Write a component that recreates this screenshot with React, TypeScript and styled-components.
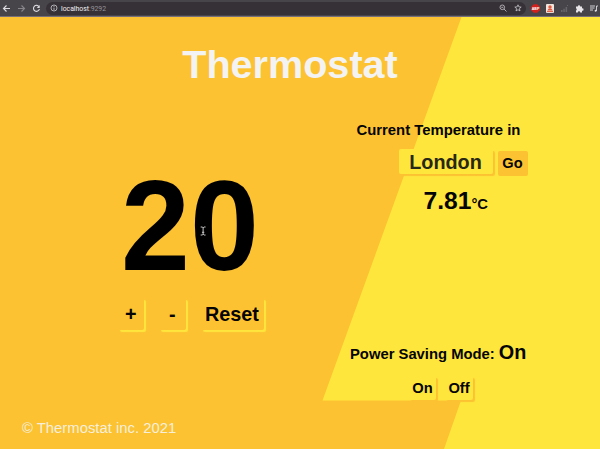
import React from "react";
import styled, { createGlobalStyle } from "styled-components";

const ORANGE = "#fcc232";
const YELLOW = "#ffe63d";

const GlobalStyle = createGlobalStyle`
  * { box-sizing: border-box; }
  body { margin: 0; background: ${ORANGE}; overflow: hidden; }
  button, input { font-family: inherit; }
`;

const Window = styled.div`
  width: 600px;
  height: 449px;
  display: flex;
  flex-direction: column;
  font-family: "Liberation Sans", Arial, sans-serif;
  color: #050505;
`;

const Toolbar = styled.header`
  flex: none;
  height: 17px;
  display: flex;
  align-items: center;
  background: #48454a;
  border-bottom: 1px solid #77707a;
`;

const NavIcons = styled.div`
  display: flex;
  gap: 6px;
  width: 46px;
  padding-left: 2px;
  svg { display: block; }
`;

const AddressBar = styled.div`
  width: 480px;
  height: 13px;
  border-radius: 7px;
  background: #353136;
  display: flex;
  align-items: center;
  padding: 0 4px;
  font: 6.85px/12px Roboto, sans-serif;
  color: #98949a;
  svg { display: block; flex: none; }
`;

const UrlText = styled.span`
  padding: 1px 0 0 3px;
`;

const Host = styled.span`
  color: #f1eff2;
`;

const BarIcons = styled.div`
  display: flex;
  gap: 7px;
  margin-left: auto;
`;

const Extensions = styled.div`
  display: flex;
  gap: 6px;
  margin-left: 5px;
  svg { display: block; }
`;

const Page = styled.main`
  position: relative;
  isolation: isolate;
  flex: 1;
  display: flex;
  flex-direction: column;
  background: ${ORANGE};
  &::before {
    content: "";
    position: absolute;
    inset: 0;
    z-index: -1;
    background: ${YELLOW};
    clip-path: polygon(461.5px 0, 600px 0, 600px 432px, 444px 432px, 461px 383.5px, 322.5px 383.5px);
  }
`;

const Title = styled.h1`
  margin: 24px 0 0;
  height: 48px;
  padding-right: 20px;
  text-align: center;
  font-size: 39.6px;
  line-height: 47px;
  color: #f3f3f3;
`;

const Columns = styled.div`
  display: grid;
  grid-template-columns: 318px 1fr;
  height: 323px;
`;

const Dial = styled.section`
  display: flex;
  flex-direction: column;
  padding: 74px 0 0 117.5px;
`;

const Reading = styled.div`
  position: relative;
  width: 144px;
  height: 126px;
  text-align: center;
  font-size: 127.5px;
  line-height: 126px;
  font-weight: bold;
  color: #000;
  transform: scaleX(0.972);
`;

const Pointer = styled.svg`
  position: absolute;
  left: 82px;
  top: 63px;
`;

const DialButtons = styled.div`
  display: flex;
  gap: 15px;
  margin-top: 9px;
`;

const Button = styled.button<{ $w: number; $h: number; $size: number; $shade: string; $fill?: string }>`
  flex: none;
  width: ${(p) => p.$w}px;
  height: ${(p) => p.$h}px;
  padding: 0;
  border: 0;
  border-radius: 2px;
  background: ${(p) => p.$fill ?? "transparent"};
  box-shadow: 2px 2px 1px ${(p) => p.$shade};
  color: inherit;
  font-size: ${(p) => p.$size}px;
  line-height: ${(p) => p.$h}px;
  font-weight: bold;
  text-align: center;
`;

const Side = styled.section`
  display: flex;
  flex-direction: column;
  padding-top: 31px;
  font-weight: bold;
`;

const Label = styled.h2`
  margin: 0 0 0 38.5px;
  font-size: 14.85px;
  line-height: 20px;
  white-space: nowrap;
`;

const CityRow = styled.form`
  display: flex;
  align-items: flex-start;
  gap: 5px;
  margin: 9px 0 0 80.5px;
  height: 27px;
`;

const CityInput = styled.input`
  width: 94px;
  height: 25px;
  padding: 1px 0 0;
  border: 0;
  border-radius: 2px;
  background: ${YELLOW};
  box-shadow: 2px 2px 1px ${ORANGE};
  text-align: center;
  font-size: 19.8px;
  font-weight: bold;
  color: #282816;
`;

const GoSlot = styled.div`
  display: flex;
  padding-top: 2px;
`;

const Outside = styled.div`
  margin: 10px 0 0 105.5px;
  font-size: 24.6px;
  line-height: 30px;
  white-space: nowrap;
`;

const Unit = styled.span`
  font-size: 14.8px;
`;

const Mode = styled.div`
  margin: 118px 0 0 32px;
  font-size: 14.8px;
  line-height: 30px;
  white-space: nowrap;
`;

const ModeValue = styled.span`
  font-size: 19.8px;
`;

const ModeButtons = styled.div`
  display: flex;
  gap: 9px;
  margin: 7px 0 0 91px;
`;

const Footer = styled.footer`
  padding: 4px 0 0 22px;
  font-size: 14.85px;
  line-height: 24px;
  color: #f5efdc;
`;

const stroke = { fill: "none", stroke: "#dedce0", strokeWidth: 1.1 } as const;

function BrowserBar() {
  return (
    <Toolbar>
      <NavIcons>
        <svg width="9" height="9" viewBox="0 0 9 9" {...stroke}><path d="M8 4.5H1.5M4.5 1.5l-3 3 3 3" /></svg>
        <svg width="9" height="9" viewBox="0 0 9 9" {...stroke} stroke="#88858a"><path d="M1 4.5h6.5M4.5 1.5l3 3-3 3" /></svg>
        <svg width="9" height="9" viewBox="0 0 9 9" {...stroke}><path d="M7 2.7A3 3 0 1 0 7.4 5" /><path d="M7.7 1v3H4.8z" fill="#dedce0" stroke="none" /></svg>
      </NavIcons>
      <AddressBar>
        <svg width="8" height="8" viewBox="0 0 8 8" {...stroke} strokeWidth=".9" stroke="#bdbabf"><circle cx="4" cy="4" r="3" /><path d="M4 3.6V6M4 2v.9" /></svg>
        <UrlText><Host>localhost</Host>:9292</UrlText>
        <BarIcons>
          <svg width="8" height="8" viewBox="0 0 8 8" {...stroke} strokeWidth=".9" stroke="#b9b6bb"><circle cx="3.3" cy="3.3" r="2.3" /><path d="M5 5l2.5 2.5M2.3 3.3h2" /></svg>
          <svg width="8" height="8" viewBox="0 0 8 8" {...stroke} strokeWidth=".8" stroke="#c9c6cb"><path d="M4 .8l.9 2.1 2.3.2-1.8 1.5.6 2.3L4 5.7 2 6.9l.6-2.3L.8 3.1l2.3-.2z" /></svg>
        </BarIcons>
      </AddressBar>
      <Extensions>
        <svg width="9" height="9" viewBox="0 0 9 9"><path d="M2.7.3h3.6l2.4 2.4v3.6L6.3 8.7H2.7L.3 6.3V2.7z" fill="#d3201c" /><text x="4.5" y="5.8" textAnchor="middle" fontSize="3.6" fontWeight="bold" fontFamily="Liberation Sans" fill="#fff">ABP</text></svg>
        <svg width="8" height="9" viewBox="0 0 8 9"><rect width="8" height="9" rx="1" fill="#eee6df" /><path d="M1.3 6.5h5.4L5.5 4.8H2.5z" fill="#e3573c" /><circle cx="4" cy="3" r="1.7" fill="#e3573c" /><path d="M1 7.6h6" stroke="#e3573c" /></svg>
        <svg width="9" height="9" viewBox="0 0 9 9" fill="#68656a"><path d="M1 6h1.5v2H1zM3.3 4.7h1.5V8H3.3zM5.6 3h1.5v5H5.6zM7 1h1v1H7z" /></svg>
        <svg width="9" height="9" viewBox="0 0 9 9" fill="#e8e6e9"><path d="M1 2.5h1.8a1.2 1.2 0 1 1 2.4 0H7v1.9a1.2 1.2 0 1 1 0 2.3v1.8H5.2a1.2 1.2 0 0 0-2.4 0H1V6.5a1.2 1.2 0 0 0 0-2.2z" /></svg>
        <svg width="8" height="9" viewBox="0 0 8 9" {...stroke} strokeWidth=".9"><path d="M0 2h5M0 4h4.5M0 6h3M6.5 7V2H8" /><circle cx="5.6" cy="6.7" r="1" fill="#dedce0" stroke="none" /></svg>
      </Extensions>
    </Toolbar>
  );
}

export default function App() {
  return (
    <Window>
      <GlobalStyle />
      <BrowserBar />
      <Page>
        <Title>Thermostat</Title>
        <Columns>
          <Dial>
            <Reading>
              20
              <Pointer width="7" height="10" viewBox="0 0 7 10" fill="none" stroke="#c9c9c9" strokeWidth="1">
                <path d="M1 1h1.5l1 .8 1-.8H6M3.5 1.8v6.4M1 9h1.5l1-.8 1 .8H6M2.3 6.3h2.4" />
              </Pointer>
            </Reading>
            <DialButtons>
              <Button $w={26.5} $h={32} $size={19.8} $shade={YELLOW}>+</Button>
              <Button $w={26.5} $h={32} $size={19.8} $shade={YELLOW}>-</Button>
              <Button $w={63} $h={32} $size={19.8} $shade={YELLOW}>Reset</Button>
            </DialButtons>
          </Dial>
          <Side>
            <Label>Current Temperature in</Label>
            <CityRow>
              <CityInput defaultValue="London" />
              <GoSlot>
                <Button type="button" $w={30} $h={25} $size={14.6} $shade="transparent" $fill={ORANGE}>Go</Button>
              </GoSlot>
            </CityRow>
            <Outside>7.81<Unit>°C</Unit></Outside>
            <Mode>Power Saving Mode: <ModeValue>On</ModeValue></Mode>
            <ModeButtons>
              <Button $w={27} $h={24} $size={14.7} $shade={ORANGE}>On</Button>
              <Button $w={28} $h={24} $size={14.7} $shade={ORANGE} $fill={YELLOW}>Off</Button>
            </ModeButtons>
          </Side>
        </Columns>
        <Footer>© Thermostat inc. 2021</Footer>
      </Page>
    </Window>
  );
}
